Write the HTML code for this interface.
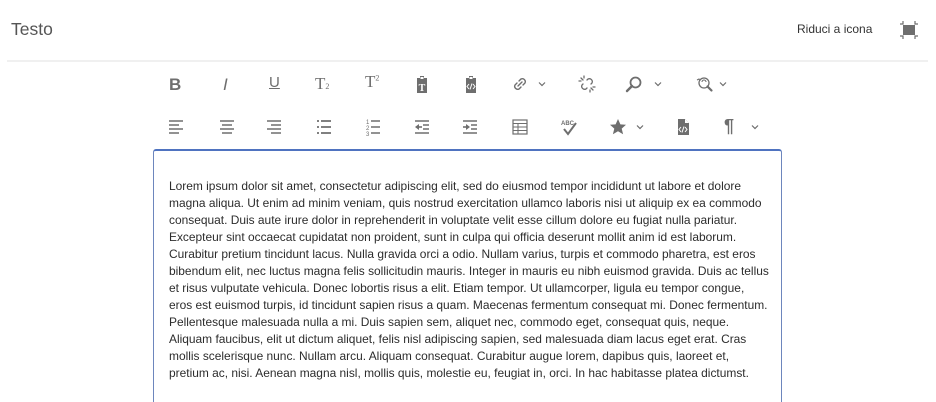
<!DOCTYPE html>
<html><head><meta charset="utf-8"><style>
*{margin:0;padding:0;box-sizing:border-box}
html,body{width:936px;height:402px;overflow:hidden}
body{background:#fff;font-family:"Liberation Sans",sans-serif;position:relative;color:#4b4b4b}
.a{position:absolute}
.ic{position:absolute;width:20px;height:20px;margin-left:-10px;margin-top:-10px}
.ch{position:absolute;width:10px;height:6px;margin-top:-3px}
.txt{position:absolute;left:169px;top:178px;font-size:11.95px;line-height:17px;color:#2c2c2c;white-space:nowrap}
</style></head><body>
<div class="a" style="left:11px;top:19px;font-size:17.5px;color:#555">Testo</div>
<div class="a" style="left:797px;top:22px;font-size:12px;color:#333">Riduci a icona</div>
<svg class="a" style="left:899px;top:20px" width="20" height="20" viewBox="0 0 20 20"><rect x="4" y="5" width="12" height="10" fill="#6e6e6e"/><path d="M1 4h3V1M16 1v3h3M1 16h3v3M16 19v-3h3" stroke="#6e6e6e" stroke-width="1.2" fill="none"/></svg>
<div class="a" style="left:7px;top:60px;width:921px;height:2px;background:#f0f0f0"></div>

<!-- row 1 -->
<div class="a" style="left:169px;top:75px;font-size:17px;font-weight:bold;color:#6e6e6e">B</div>
<div class="a" style="left:223px;top:75px;font-size:17px;font-style:italic;color:#6e6e6e">I</div>
<div class="a" style="left:269px;top:74px;font-size:15px;text-decoration:underline;color:#6e6e6e">U</div>
<div class="a" style="left:315px;top:74px;font-size:17px;font-family:'Liberation Serif',serif;color:#6e6e6e">T<span style="font-size:8px">2</span></div>
<div class="a" style="left:365px;top:72px;font-size:17px;font-family:'Liberation Serif',serif;color:#6e6e6e">T<sup style="font-size:8px">2</sup></div>
<svg class="ic" style="left:422px;top:84px" viewBox="0 0 20 20"><path d="M8 2h4v2h3v15H5V4h3z" fill="#6e6e6e"/><rect x="8.5" y="3" width="3" height="2" fill="#fff"/><text x="10" y="17" font-size="10" font-family="Liberation Serif" font-weight="bold" fill="#fff" text-anchor="middle">T</text></svg>
<svg class="ic" style="left:471px;top:84px" viewBox="0 0 20 20"><path d="M8 2h4v2h3v15H5V4h3z" fill="#6e6e6e"/><rect x="8.5" y="3" width="3" height="2" fill="#fff"/><path d="M8 10l-2 2.5 2 2.5M12 10l2 2.5-2 2.5M11 9.5l-2 6" stroke="#fff" stroke-width="1" fill="none"/></svg>
<svg class="ic" style="left:520px;top:84px" viewBox="0 0 20 20"><path d="M9 7l2-2a3 3 0 014 4l-2 2M11 13l-2 2a3 3 0 01-4-4l2-2M8 12l4-4" stroke="#6e6e6e" stroke-width="1.4" fill="none" stroke-linecap="round"/></svg>
<svg class="ch" style="left:537px;top:84px" viewBox="0 0 10 6"><path d="M2 1.5l3 3 3-3" stroke="#6e6e6e" stroke-width="1.2" fill="none"/></svg>
<svg class="ic" style="left:587px;top:84px" viewBox="0 0 20 20"><path d="M10 6l1-1a3 3 0 014 4l-1 1M10 14l-1 1a3 3 0 01-4-4l1-1M4 4l2 2M16 16l-2-2M7 2v2M13 18v-2M2 7h2M18 13h-2" stroke="#6e6e6e" stroke-width="1.3" fill="none" stroke-linecap="round"/></svg>
<svg class="ic" style="left:634px;top:84px" viewBox="0 0 20 20"><circle cx="11.5" cy="8.5" r="5" stroke="#6e6e6e" stroke-width="1.8" fill="none"/><path d="M8 12l-5 5" stroke="#6e6e6e" stroke-width="2.4" stroke-linecap="round"/></svg>
<svg class="ch" style="left:653px;top:84px" viewBox="0 0 10 6"><path d="M2 1.5l3 3 3-3" stroke="#6e6e6e" stroke-width="1.2" fill="none"/></svg>
<svg class="ic" style="left:704px;top:84px" viewBox="0 0 20 20"><circle cx="10" cy="9" r="5" stroke="#6e6e6e" stroke-width="1.3" fill="none"/><path d="M13.5 12.5l4 4" stroke="#6e6e6e" stroke-width="2.2" stroke-linecap="round"/><path d="M3 6l2-1 1 2M8 8a2 2 0 014 0" stroke="#6e6e6e" stroke-width="1.1" fill="none"/></svg>
<svg class="ch" style="left:718px;top:84px" viewBox="0 0 10 6"><path d="M2 1.5l3 3 3-3" stroke="#6e6e6e" stroke-width="1.2" fill="none"/></svg>

<!-- row 2 -->
<svg class="ic" style="left:176px;top:127px" viewBox="0 0 20 20"><path d="M3 4h14M3 8h10M3 12h14M3 16h10" stroke="#6e6e6e" stroke-width="1.6"/></svg>
<svg class="ic" style="left:227px;top:127px" viewBox="0 0 20 20"><path d="M3 4h14M5 8h10M3 12h14M5 16h10" stroke="#6e6e6e" stroke-width="1.6"/></svg>
<svg class="ic" style="left:274px;top:127px" viewBox="0 0 20 20"><path d="M3 4h14M7 8h10M3 12h14M7 16h10" stroke="#6e6e6e" stroke-width="1.6"/></svg>
<svg class="ic" style="left:324px;top:127px" viewBox="0 0 20 20"><path d="M3 4h2M7 4h10M3 10h2M7 10h10M3 16h2M7 16h10" stroke="#6e6e6e" stroke-width="1.8"/></svg>
<svg class="ic" style="left:373px;top:127px" viewBox="0 0 20 20"><text x="3" y="7" font-size="6" fill="#6e6e6e">1</text><text x="3" y="13" font-size="6" fill="#6e6e6e">2</text><text x="3" y="19" font-size="6" fill="#6e6e6e">3</text><path d="M8 4h9M8 10h9M8 16h9" stroke="#6e6e6e" stroke-width="1.6"/></svg>
<svg class="ic" style="left:422px;top:127px" viewBox="0 0 20 20"><path d="M3 4h14M11 8h6M11 12h6M3 16h14" stroke="#6e6e6e" stroke-width="1.6"/><path d="M3 10l4-3v6z" fill="#6e6e6e"/><path d="M6 10h4" stroke="#6e6e6e" stroke-width="1.6"/></svg>
<svg class="ic" style="left:470px;top:127px" viewBox="0 0 20 20"><path d="M3 4h14M11 8h6M11 12h6M3 16h14" stroke="#6e6e6e" stroke-width="1.6"/><path d="M10 10l-4-3v6z" fill="#6e6e6e"/><path d="M3 10h4" stroke="#6e6e6e" stroke-width="1.6"/></svg>
<svg class="ic" style="left:520px;top:127px" viewBox="0 0 20 20"><rect x="3" y="3" width="14" height="14" fill="none" stroke="#6e6e6e" stroke-width="1.2"/><path d="M3 6.5h14M3 10h14M3 13.5h14M8 6.5v10.5" stroke="#6e6e6e" stroke-width="1"/></svg>
<svg class="ic" style="left:569px;top:127px" viewBox="0 0 20 20"><text x="2" y="8" font-size="6" font-weight="bold" fill="#6e6e6e">ABC</text><path d="M5 12l4 5 8-11" stroke="#6e6e6e" stroke-width="2" fill="none"/></svg>
<svg class="ic" style="left:618px;top:127px" viewBox="0 0 20 20"><path d="M10 2l2.4 5.4 5.6.4-4.3 3.8 1.4 5.6L10 14.2 4.9 17.2l1.4-5.6L2 7.8l5.6-.4z" fill="#6e6e6e"/></svg>
<svg class="ch" style="left:635px;top:127px" viewBox="0 0 10 6"><path d="M2 1.5l3 3 3-3" stroke="#6e6e6e" stroke-width="1.2" fill="none"/></svg>
<svg class="ic" style="left:683px;top:127px" viewBox="0 0 20 20"><path d="M5 2h7l4 4v12H5z" fill="#6e6e6e"/><path d="M12 2v4h4" fill="#fff"/><path d="M8 10l-2 2.5 2 2.5M12 10l2 2.5-2 2.5M11 9.5l-2 6" stroke="#fff" stroke-width="1" fill="none"/></svg>
<div class="a" style="left:724px;top:116px;font-size:18px;font-weight:bold;color:#6e6e6e">¶</div>
<svg class="ch" style="left:750px;top:127px" viewBox="0 0 10 6"><path d="M2 1.5l3 3 3-3" stroke="#6e6e6e" stroke-width="1.2" fill="none"/></svg>

<div class="a" style="left:153px;top:149px;width:629px;height:270px;border:1px solid #6d86bd;border-top:2px solid #4f73c0;border-radius:3px"></div>
<div class="txt">Lorem ipsum dolor sit amet, consectetur adipiscing elit, sed do eiusmod tempor incididunt ut labore et dolore<br>magna aliqua. Ut enim ad minim veniam, quis nostrud exercitation ullamco laboris nisi ut aliquip ex ea commodo<br>consequat. Duis aute irure dolor in reprehenderit in voluptate velit esse cillum dolore eu fugiat nulla pariatur.<br>Excepteur sint occaecat cupidatat non proident, sunt in culpa qui officia deserunt mollit anim id est laborum.<br>Curabitur pretium tincidunt lacus. Nulla gravida orci a odio. Nullam varius, turpis et commodo pharetra, est eros<br>bibendum elit, nec luctus magna felis sollicitudin mauris. Integer in mauris eu nibh euismod gravida. Duis ac tellus<br>et risus vulputate vehicula. Donec lobortis risus a elit. Etiam tempor. Ut ullamcorper, ligula eu tempor congue,<br>eros est euismod turpis, id tincidunt sapien risus a quam. Maecenas fermentum consequat mi. Donec fermentum.<br>Pellentesque malesuada nulla a mi. Duis sapien sem, aliquet nec, commodo eget, consequat quis, neque.<br>Aliquam faucibus, elit ut dictum aliquet, felis nisl adipiscing sapien, sed malesuada diam lacus eget erat. Cras<br>mollis scelerisque nunc. Nullam arcu. Aliquam consequat. Curabitur augue lorem, dapibus quis, laoreet et,<br>pretium ac, nisi. Aenean magna nisl, mollis quis, molestie eu, feugiat in, orci. In hac habitasse platea dictumst.</div>
</body></html>
